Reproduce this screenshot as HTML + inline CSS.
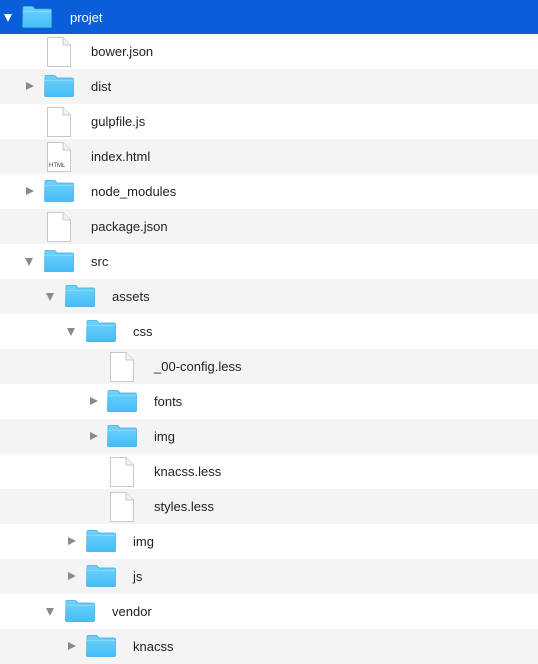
<!DOCTYPE html>
<html><head><meta charset="utf-8"><style>
body{margin:0;width:538px;height:663px;overflow:hidden;background:#fff;font-family:"Liberation Sans",Arial,sans-serif;font-size:13px;color:#222}
.r{position:absolute;left:0;width:538px;height:35px}
.g{background:#f4f4f4}
.h{background:#0a5ed7;height:34px;top:0;color:#fff}
.r span{position:absolute;top:10px}
.r svg{position:absolute}
.t{position:absolute;top:13px;width:0;height:0}
.tr{border-top:4.5px solid transparent;border-bottom:4.5px solid transparent;border-left:8px solid #8a8a8a}
.td{border-left:4.5px solid transparent;border-right:4.5px solid transparent;border-top:8px solid #8a8a8a;top:14px}
</style></head><body>
<svg width="0" height="0" style="position:absolute"><defs>
<linearGradient id="fg" x1="0" y1="0" x2="0" y2="1"><stop offset="0" stop-color="#6fd3fd"/><stop offset="1" stop-color="#45bdf7"/></linearGradient>
<symbol id="f" viewBox="0 0 30 22"><path d="M1 1.5Q1 0.5 2 0.5H10Q11 0.5 11.8 1.5L12.8 3H28Q29.5 3 29.5 4.5V20.5Q29.5 21.5 28.5 21.5H1.5Q0.5 21.5 0.5 20.5Z" fill="url(#fg)" stroke="#3aa9e0" stroke-width="0.7"/><path d="M0.8 5.5H29.2" stroke="#8fdcfd" stroke-width="0.8"/></symbol>
<symbol id="d" viewBox="0 0 24 30"><path d="M1 0.5H16L23.5 8V29.5H0.5V0.5Z" fill="#fff" stroke="#c8c8c8"/><path d="M16 0.5V8H23.5" fill="#f2f2f2" stroke="#c8c8c8"/></symbol>
</defs></svg>

<div class="r h"><div class="t td" style="left:4px;border-top-color:#fff"></div><svg style="left:22px;top:6px" width="30" height="22"><use href="#f"/></svg><span style="left:70px">projet</span></div>

<div class="r" style="top:34px"><svg style="left:47px;top:3px" width="24" height="30"><use href="#d"/></svg><span style="left:91px">bower.json</span></div>
<div class="r g" style="top:69px"><div class="t tr" style="left:26px"></div><svg style="left:44px;top:6px" width="30" height="22"><use href="#f"/></svg><span style="left:91px">dist</span></div>
<div class="r" style="top:104px"><svg style="left:47px;top:3px" width="24" height="30"><use href="#d"/></svg><span style="left:91px">gulpfile.js</span></div>
<div class="r g" style="top:139px"><svg style="left:47px;top:3px" width="24" height="30"><use href="#d"/></svg><div style="position:absolute;left:49px;top:24px;font-size:6px;color:#444">HTML</div><span style="left:91px">index.html</span></div>
<div class="r" style="top:174px"><div class="t tr" style="left:26px"></div><svg style="left:44px;top:6px" width="30" height="22"><use href="#f"/></svg><span style="left:91px">node_modules</span></div>
<div class="r g" style="top:209px"><svg style="left:47px;top:3px" width="24" height="30"><use href="#d"/></svg><span style="left:91px">package.json</span></div>
<div class="r" style="top:244px"><div class="t td" style="left:25px"></div><svg style="left:44px;top:6px" width="30" height="22"><use href="#f"/></svg><span style="left:91px">src</span></div>
<div class="r g" style="top:279px"><div class="t td" style="left:46px"></div><svg style="left:65px;top:6px" width="30" height="22"><use href="#f"/></svg><span style="left:112px">assets</span></div>
<div class="r" style="top:314px"><div class="t td" style="left:67px"></div><svg style="left:86px;top:6px" width="30" height="22"><use href="#f"/></svg><span style="left:133px">css</span></div>
<div class="r g" style="top:349px"><svg style="left:110px;top:3px" width="24" height="30"><use href="#d"/></svg><span style="left:154px">_00-config.less</span></div>
<div class="r" style="top:384px"><div class="t tr" style="left:90px"></div><svg style="left:107px;top:6px" width="30" height="22"><use href="#f"/></svg><span style="left:154px">fonts</span></div>
<div class="r g" style="top:419px"><div class="t tr" style="left:90px"></div><svg style="left:107px;top:6px" width="30" height="22"><use href="#f"/></svg><span style="left:154px">img</span></div>
<div class="r" style="top:454px"><svg style="left:110px;top:3px" width="24" height="30"><use href="#d"/></svg><span style="left:154px">knacss.less</span></div>
<div class="r g" style="top:489px"><svg style="left:110px;top:3px" width="24" height="30"><use href="#d"/></svg><span style="left:154px">styles.less</span></div>
<div class="r" style="top:524px"><div class="t tr" style="left:68px"></div><svg style="left:86px;top:6px" width="30" height="22"><use href="#f"/></svg><span style="left:133px">img</span></div>
<div class="r g" style="top:559px"><div class="t tr" style="left:68px"></div><svg style="left:86px;top:6px" width="30" height="22"><use href="#f"/></svg><span style="left:133px">js</span></div>
<div class="r" style="top:594px"><div class="t td" style="left:46px"></div><svg style="left:65px;top:6px" width="30" height="22"><use href="#f"/></svg><span style="left:112px">vendor</span></div>
<div class="r g" style="top:629px"><div class="t tr" style="left:68px"></div><svg style="left:86px;top:6px" width="30" height="22"><use href="#f"/></svg><span style="left:133px">knacss</span></div>
</body></html>
